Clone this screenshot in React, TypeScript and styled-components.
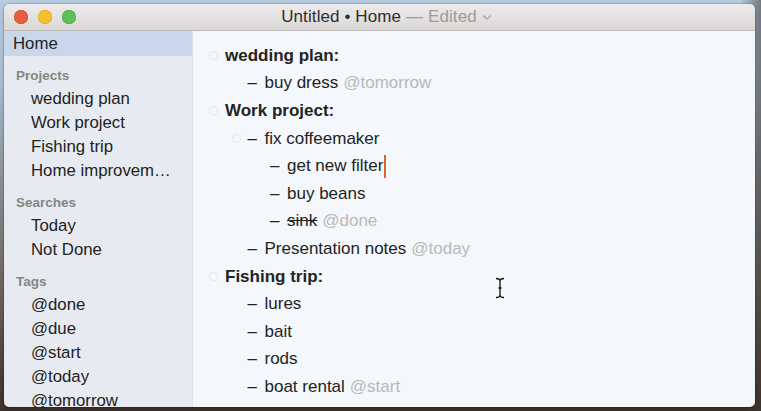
import React from "react";
import styled, { createGlobalStyle } from "styled-components";

const Global = createGlobalStyle`
  html, body { margin: 0; padding: 0; }
  body {
    width: 761px;
    height: 411px;
    overflow: hidden;
    font-family: "Liberation Sans", Arial, sans-serif;
    background:
      linear-gradient(to right, rgba(0,0,0,0) 740px, rgba(60,55,50,0.55) 761px),
      linear-gradient(to bottom, #b7cde2 0px, #aec3d6 80px, #8d949a 180px, #6c625a 300px, #3e3129 411px);
  }
`;

const Desktop = styled.div`
  width: 761px;
  height: 411px;
  padding: 4px 0 0 4px;
  box-sizing: border-box;
`;

const Window = styled.div`
  width: 751px;
  height: 403px;
  border-radius: 5px;
  overflow: hidden;
  display: flex;
  flex-direction: column;
  box-shadow: 0 0 0 0.5px rgba(0,0,0,0.25), 0 2px 6px rgba(0,0,0,0.2);
`;

const TitleBar = styled.div`
  height: 26px;
  flex: none;
  position: relative;
  display: flex;
  align-items: center;
  justify-content: center;
  background: linear-gradient(to bottom, #eceaea, #dcd8d8);
  border-bottom: 1px solid #bdbaba;
`;

const Lights = styled.div`
  position: absolute;
  left: 10px;
  top: 6px;
  display: flex;
  gap: 10px;
`;

const Light = styled.span<{ $c: string; $b: string }>`
  width: 14px;
  height: 14px;
  border-radius: 50%;
  background: ${(p) => p.$c};
  box-shadow: inset 0 0 0 0.5px ${(p) => p.$b};
`;

const Title = styled.div`
  font-size: 17px;
  color: #2e2e2e;
  letter-spacing: 0.1px;
  display: flex;
  align-items: center;
  gap: 5px;
  margin-left: 14px;
`;

const Dim = styled.span`
  color: #9b9b9b;
`;

const Body = styled.div`
  flex: 1;
  display: flex;
  min-height: 0;
`;

const Sidebar = styled.div`
  width: 188px;
  flex: none;
  background: #e7ebf1;
  border-right: 1px solid #dfe3e8;
  display: flex;
  flex-direction: column;
  overflow: hidden;
`;

const HomeRow = styled.div`
  height: 25px;
  flex: none;
  background: #cad7ea;
  padding-left: 9px;
  display: flex;
  align-items: center;
  font-size: 16.8px;
  color: #1f1f1f;
`;

const Section = styled.div`
  flex: none;
  padding-top: 12px;
  display: flex;
  flex-direction: column;
`;

const SectionHead = styled.div`
  line-height: 16px;
  padding-left: 12px;
  margin-bottom: 3px;
  font-size: 13.5px;
  font-weight: 700;
  color: #858585;
`;

const SideItem = styled.div`
  line-height: 24px;
  height: 24px;
  flex: none;
  padding-left: 27px;
  padding-right: 16px;
  font-size: 16.8px;
  color: #222;
  white-space: nowrap;
  overflow: hidden;
  text-overflow: ellipsis;
`;

const Main = styled.div`
  flex: 1;
  background: #f4f7fb;
  padding-top: 11px;
  position: relative;
`;

const Row = styled.div<{ $level: number }>`
  height: 27.6px;
  display: flex;
  align-items: center;
  padding-left: ${(p) => 15 + p.$level * 22.5}px;
  font-size: 17px;
  color: #232323;
  white-space: nowrap;
`;

const Handle = styled.span<{ $show: boolean }>`
  width: 17px;
  flex: none;
  display: flex;
  align-items: center;
  padding-left: 1px;
  box-sizing: border-box;
  &::before {
    content: "";
    width: 7px;
    height: 7px;
    border-radius: 50%;
    border: 1px dotted #ebcfb4;
    visibility: ${(p) => (p.$show ? "visible" : "hidden")};
  }
`;

const Dash = styled.span`
  width: 17px;
  flex: none;
`;

const Text = styled.span<{ $bold?: boolean; $done?: boolean }>`
  font-weight: ${(p) => (p.$bold ? 700 : 400)};
  text-decoration: ${(p) => (p.$done ? "line-through" : "none")};
`;

const Tag = styled.span`
  color: #b9b9b9;
  margin-left: 5px;
`;

const Caret = styled.span`
  display: inline-block;
  width: 2px;
  height: 23px;
  background: #e0622e;
  margin-left: 1px;
`;

const IBeam = styled.svg`
  position: absolute;
  left: 302px;
  top: 246px;
`;

type Item = {
  level: number;
  text: string;
  project?: boolean;
  handle?: boolean;
  tag?: string;
  done?: boolean;
  caret?: boolean;
};

const items: Item[] = [
  { level: 0, text: "wedding plan:", project: true, handle: true },
  { level: 1, text: "buy dress", tag: "@tomorrow" },
  { level: 0, text: "Work project:", project: true, handle: true },
  { level: 1, text: "fix coffeemaker", handle: true },
  { level: 2, text: "get new filter", caret: true },
  { level: 2, text: "buy beans" },
  { level: 2, text: "sink", tag: "@done", done: true },
  { level: 1, text: "Presentation notes", tag: "@today" },
  { level: 0, text: "Fishing trip:", project: true, handle: true },
  { level: 1, text: "lures" },
  { level: 1, text: "bait" },
  { level: 1, text: "rods" },
  { level: 1, text: "boat rental", tag: "@start" },
];

const sections = [
  { head: "Projects", items: ["wedding plan", "Work project", "Fishing trip", "Home improvements"] },
  { head: "Searches", items: ["Today", "Not Done"] },
  { head: "Tags", items: ["@done", "@due", "@start", "@today", "@tomorrow"] },
];

export default function App() {
  return (
    <Desktop>
      <Global />
      <Window>
        <TitleBar>
          <Lights>
            <Light $c="#e2603f" $b="#c94a2e" />
            <Light $c="#f4bf2d" $b="#d9a31a" />
            <Light $c="#5cc15b" $b="#43a543" />
          </Lights>
          <Title>
            <span>Untitled • Home</span>
            <Dim>— Edited</Dim>
            <svg width="10" height="7" viewBox="0 0 10 7">
              <path d="M1 1.5 L5 5 L9 1.5" fill="none" stroke="#a3a3a3" strokeWidth="1.3" />
            </svg>
          </Title>
        </TitleBar>
        <Body>
          <Sidebar>
            <HomeRow>Home</HomeRow>
            {sections.map((s) => (
              <Section key={s.head}>
                <SectionHead>{s.head}</SectionHead>
                {s.items.map((i) => (
                  <SideItem key={i}>{i}</SideItem>
                ))}
              </Section>
            ))}
          </Sidebar>
          <Main>
            {items.map((it, idx) => (
              <Row key={idx} $level={it.level}>
                <Handle $show={!!it.handle} />
                {!it.project && <Dash>–</Dash>}
                <Text $bold={it.project} $done={it.done}>
                  {it.text}
                </Text>
                {it.caret && <Caret />}
                {it.tag && <Tag>{it.tag}</Tag>}
              </Row>
            ))}
            <IBeam width="10" height="22" viewBox="0 0 10 22">
              <path
                d="M1 1.5 Q5 1.5 5 4 L5 18 Q5 20.5 1 20.5 M9 1.5 Q5 1.5 5 4 M5 18 Q5 20.5 9 20.5 M3.5 11 L6.5 11"
                fill="none"
                stroke="#111"
                strokeWidth="1.3"
              />
            </IBeam>
          </Main>
        </Body>
      </Window>
    </Desktop>
  );
}
